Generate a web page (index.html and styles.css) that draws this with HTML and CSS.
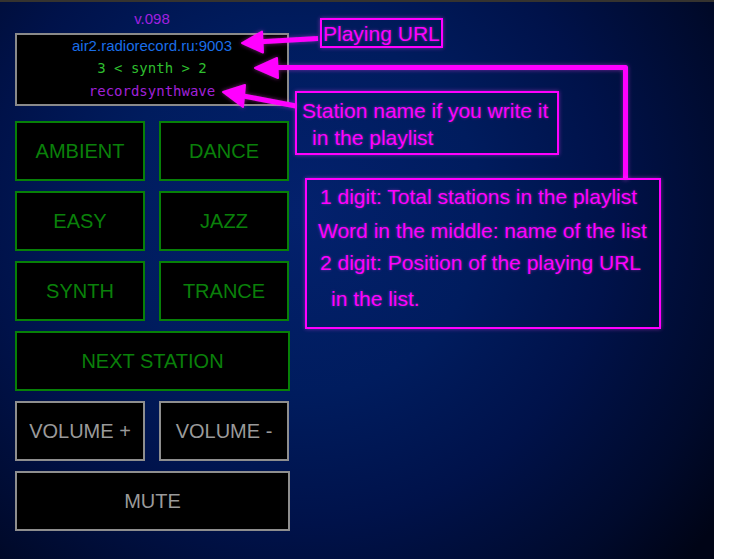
FILE: index.html
```html
<!DOCTYPE html>
<html>
<head>
<meta charset="utf-8">
<link rel="stylesheet" href="styles.css">
</head>
<body>
<div class="screen">
  <div class="panel">
    <div class="version">v.098</div>
    <div class="display">
      <div class="url">air2.radiorecord.ru:9003</div>
      <div class="list">3 &lt; synth &gt; 2</div>
      <div class="name">recordsynthwave</div>
    </div>
    <div class="grid">
      <div class="btn green">AMBIENT</div>
      <div class="btn green">DANCE</div>
      <div class="btn green">EASY</div>
      <div class="btn green">JAZZ</div>
      <div class="btn green">SYNTH</div>
      <div class="btn green">TRANCE</div>
      <div class="btn green wide">NEXT STATION</div>
      <div class="btn gray">VOLUME +</div>
      <div class="btn gray">VOLUME -</div>
      <div class="btn gray wide">MUTE</div>
    </div>
  </div>

  <svg class="arrows" width="714" height="557" viewBox="0 2 714 557">
    <defs>
      <filter id="glow" x="-20%" y="-20%" width="140%" height="140%">
        <feGaussianBlur in="SourceAlpha" stdDeviation="2" result="b"/>
        <feFlood flood-color="#ff40ff" flood-opacity="0.45"/>
        <feComposite in2="b" operator="in" result="g"/>
        <feMerge><feMergeNode in="g"/><feMergeNode in="SourceGraphic"/></feMerge>
      </filter>
    </defs>
    <g filter="url(#glow)" fill="#ff00ff" stroke="#ff00ff" stroke-linejoin="round">
      <line x1="318" y1="38.5" x2="256" y2="42" stroke-width="5"/>
      <polygon points="242,43 262,31.5 263,52.5" stroke-width="2"/>
      <polyline points="268,67.5 625.5,67.5 625.5,180" fill="none" stroke-width="5"/>
      <polygon points="255,68 277,58 278,78" stroke-width="2"/>
      <line x1="296" y1="106" x2="238" y2="95" stroke-width="5"/>
      <polygon points="223,92 245,85 243,107" stroke-width="2"/>
    </g>
  </svg>

  <div class="note note-url">Playing URL</div>
  <div class="note note-station">
    <div>Station name if you write it</div>
    <div class="ind1">in the playlist</div>
  </div>
  <div class="note note-digits">
    <div class="l1">1 digit: Total stations in the playlist</div>
    <div class="l2">Word in the middle: name of the list</div>
    <div class="l3">2 digit: Position of the playing URL</div>
    <div class="l4">in the list.</div>
  </div>
</div>
</body>
</html>
```
FILE: styles.css
```css
html, body {
  margin: 0;
  padding: 0;
  background: #ffffff;
}

.screen {
  position: relative;
  width: 714px;
  height: 557px;
  border-top: 2px solid #35332f;
  background: radial-gradient(ellipse 520px 520px at 300px 210px, #03216d 0%, #001c5e 35%, #00124a 60%, #000a2c 85%, #000416 100%);
  font-family: "Liberation Sans", Arial, sans-serif;
  overflow: hidden;
}

.panel {
  width: 274px;
  margin-left: 15px;
  display: flex;
  flex-direction: column;
}

.version {
  color: #a020e0;
  font-size: 15px;
  text-align: center;
  height: 16px;
  line-height: 16px;
  margin-top: 9px;
  margin-bottom: 6px;
}

.display {
  height: 69px;
  border: 2px solid #8a8a8a;
  background: #000;
  text-align: center;
  display: flex;
  flex-direction: column;
}

.display > div {
  height: 23px;
  line-height: 23px;
  white-space: nowrap;
}

.display .url {
  color: #1a6ee8;
  font-size: 15px;
  margin-top: -1px;
}

.display .list {
  color: #2fbf2f;
  font-family: "DejaVu Sans Mono", monospace;
  font-size: 14px;
}

.display .name {
  color: #a020d8;
  font-family: "DejaVu Sans Mono", monospace;
  font-size: 14px;
}

.grid {
  margin-top: 15px;
  display: grid;
  grid-template-columns: 130px 130px;
  column-gap: 14px;
  row-gap: 10px;
}

.btn {
  height: 56px;
  background: #000;
  display: flex;
  align-items: center;
  justify-content: center;
  font-size: 20px;
  white-space: nowrap;
}

.btn.wide {
  grid-column: 1 / 3;
  width: 271px;
}

.btn.green {
  border: 2px solid #078007;
  color: #0a800a;
}

.btn.gray {
  border: 2px solid #8e8e8e;
  color: #9a9a9a;
}

.arrows {
  position: absolute;
  left: 0;
  top: 0;
}

.note {
  position: absolute;
  border: 2px solid #ff00ff;
  color: #ff00ff;
  font-size: 21px;
  box-shadow: 0 0 4px rgba(255, 64, 255, 0.45);
  text-shadow: 0 0 3px rgba(255, 64, 255, 0.45);
  white-space: nowrap;
  box-sizing: border-box;
}

.note-url {
  left: 320px;
  top: 16px;
  width: 123px;
  height: 30px;
  padding-left: 1px;
  line-height: 27px;
}

.note-station {
  left: 295px;
  top: 89px;
  width: 264px;
  height: 64px;
  padding: 4px 0 0 5px;
  line-height: 27px;
}

.note-station .ind1 {
  margin-left: 10px;
}

.note-digits {
  left: 305px;
  top: 176px;
  width: 356px;
  height: 151px;
  padding-top: 2px;
}

.note-digits > div {
  line-height: 30px;
}

.note-digits .l1 { margin-left: 13px; height: 34px; }
.note-digits .l2 { margin-left: 11px; height: 32px; }
.note-digits .l3 { margin-left: 13px; height: 36px; }
.note-digits .l4 { margin-left: 24px; height: 30px; }
```
